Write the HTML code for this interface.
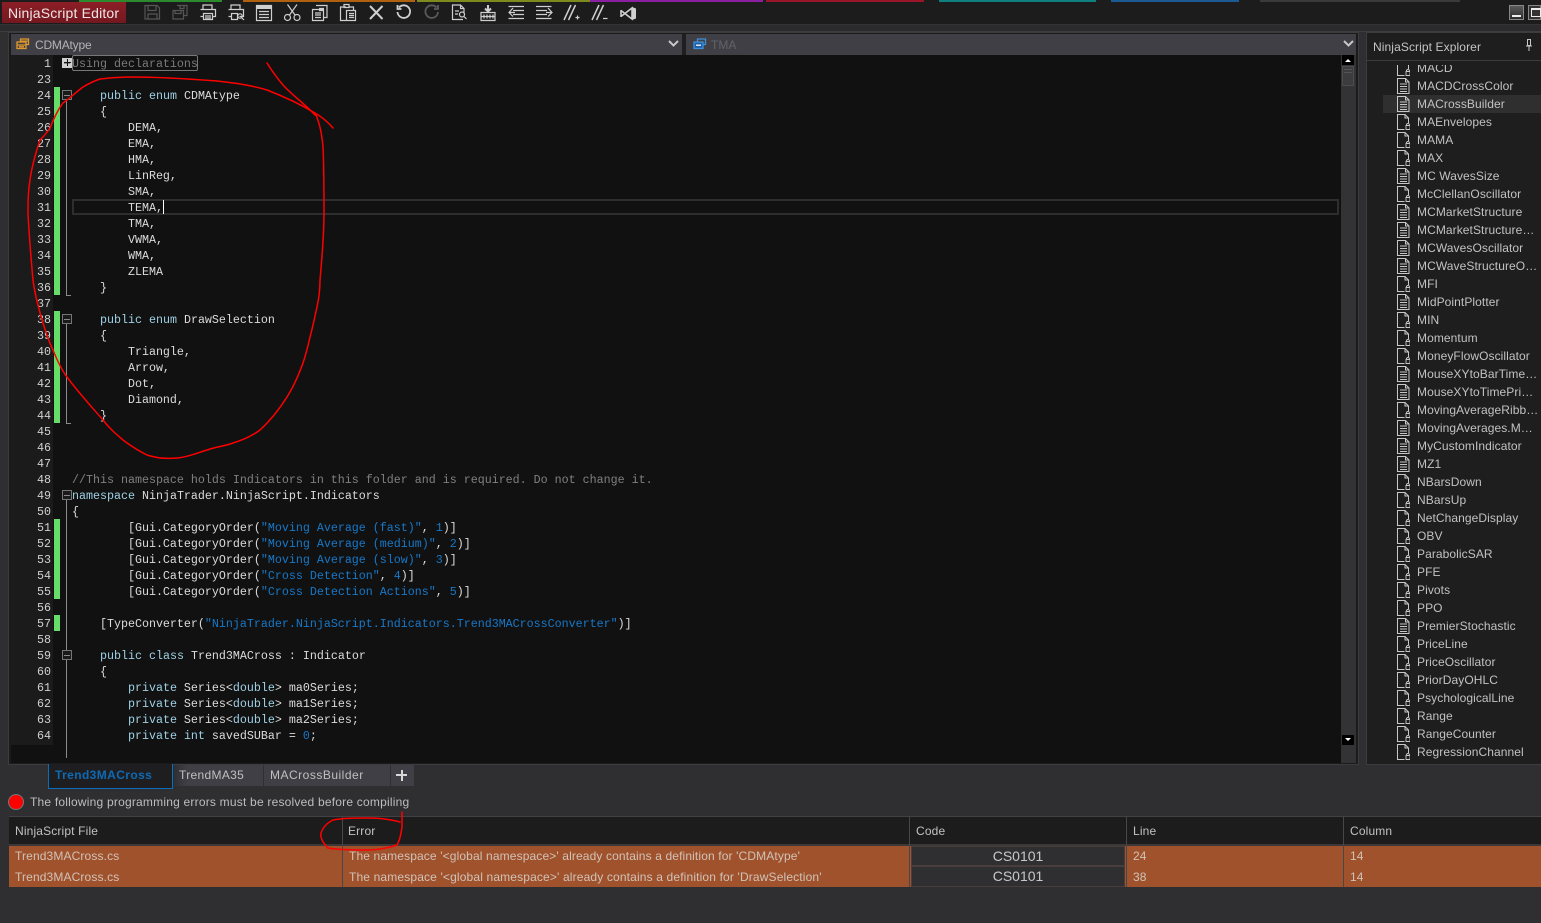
<!DOCTYPE html>
<html><head><meta charset="utf-8"><title>NinjaScript Editor</title>
<style>
html,body{margin:0;padding:0;background:#2f2f32;width:1541px;height:923px;overflow:hidden}
body{position:relative;font-family:"Liberation Sans",Arial,sans-serif;font-size:12px;color:#c4c4c4}
.a{position:absolute;display:block}
.t{position:absolute;white-space:nowrap;line-height:16px}
pre{position:absolute;margin:0;font-family:"Liberation Mono",monospace;font-size:11.67px;line-height:16px;color:#dcdcdc}
.k{color:#9fd0e4}.s{color:#1878c8}.c{color:#808080}
#ex div{height:18px;line-height:18px;padding-left:34px;position:relative;white-space:nowrap;letter-spacing:.08px;color:#c2c2c2}
#ex svg{position:absolute;left:14px;top:1px}
.g{position:absolute;left:54px;width:6px;background:#66dd66}
.fb{position:absolute;left:62px;width:8px;height:8px;border:1px solid #767676;background:#1a1a1a}
.fb:after{content:"";position:absolute;left:1px;right:1px;top:3.5px;height:1px;background:#8a8a8a}
.v{position:absolute;left:66px;width:1px;background:#8a8a8a}
.h{position:absolute;left:66px;width:5px;height:1px;background:#8a8a8a}
.sep{position:absolute;width:1px;top:817px;height:70px;background:#47474a}
.cell{position:absolute;line-height:20px;white-space:nowrap;color:#cfc3b8;letter-spacing:.13px}
.hd{position:absolute;top:823px;line-height:16px;color:#c2c2c2;letter-spacing:.15px}
</style></head><body>

<!-- top colour strip -->
<div class="a" style="left:0;top:0;width:1541px;height:24px;background:#1c1c1c"></div>
<div class="a" style="left:79px;top:0;width:143px;height:2px;background:#2c8a2c"></div>
<div class="a" style="left:243px;top:0;width:172px;height:2px;background:#b0610f"></div>
<div class="a" style="left:417px;top:0;width:173px;height:2px;background:#7f8a1c"></div>
<div class="a" style="left:590px;top:0;width:173px;height:2px;background:#8a1fa0"></div>
<div class="a" style="left:766px;top:0;width:158px;height:2px;background:#99152a"></div>
<div class="a" style="left:939px;top:0;width:157px;height:2px;background:#0f8080"></div>
<div class="a" style="left:1111px;top:0;width:128px;height:2px;background:#1c5a94"></div>
<div class="a" style="left:1260px;top:0;width:200px;height:2px;background:#3a3a3a"></div>

<!-- title -->
<div class="a" style="left:2px;top:2px;width:124px;height:21px;background:linear-gradient(#8c1e26,#741820)"></div>
<div class="t" style="left:8px;top:5px;font-size:14px;letter-spacing:.17px;color:#f0e6e6">NinjaScript Editor</div>

<!-- toolbar band -->
<div class="a" style="left:0;top:24px;width:1541px;height:1px;background:#333336"></div>
<div class="a" style="left:0;top:25px;width:1541px;height:6px;background:#2b2b2e"></div>
<div class="a" style="left:0;top:31px;width:1541px;height:1px;background:#3d3d40"></div>

<svg class="a" style="left:0;top:0" width="660" height="26" fill="none" stroke="#cfcfcf" stroke-width="1.2">
 <g stroke="#555"><path d="M145 5.500h12l2.500 2.500v11h-14.500zM148 5.500v5h8v-5M148 19v-5h9v5"/></g>
 <g stroke="#555"><path d="M177 5.500h10v10h-3M180 5.500v3h4v-3M173 10.500h10.500v8.500h-10.500zM175 10.500v3h6v-3"/></g>
 <path d="M203 9.500v-4.500h9v4.500M200.500 9.500h15v7h-3M203.500 16.500h-3M203.500 13.500h9v6h-9zM205 16h6M205 18h6"/>
 <path d="M231 9.500v-4.500h9v4.500M228.500 9.500h15v7h-4M231.500 16.500h-3M231.500 13.500h6v6h-6z"/><circle cx="240" cy="16" r="2.200"/><path d="M241.500 17.500l2.500 2.500"/>
 <path d="M256.500 5.500h15v15h-15zM259 11.500h10M259 14.500h10M259 17.500h10"/><path d="M256.500 7.500h15" stroke-width="3"/>
 <circle cx="287.500" cy="17.500" r="3"/><circle cx="297" cy="17.500" r="3"/><path d="M289.500 15l7.500-10.500M295 15l-7.500-10.500"/>
 <path d="M316 5.500h11v12h-3M319 8.500h5M319 10.500h5M312.500 9.500h11v11h-11zM315 13h6M315 15h6M315 17.500h6"/>
 <path d="M346 7h-5.500v13.500h7M344 4.500h5v3h-5zM349 7h4.500v3M346.500 10.500h9v10h-9zM349 13.500h5M349 15.500h5M349 17.500h5"/>
 <path d="M370 6l12.500 13M382.500 6l-12.500 13" stroke-width="2"/>
 <path d="M399 7.500a6.300 6.300 0 1 1-1.500 4.500M397.500 5v4h4" stroke-width="1.800"/>
 <g stroke="#5a5a5a"><path d="M436.500 7.500a6.300 6.300 0 1 0 1.500 4.500M438 5v4h-4" stroke-width="1.800"/></g>
 <path d="M463 19.500h-10.500v-14.500h8l3.500 3.500v4M460.500 5v3.500h3.500M455 11h4M455 14h3"/><circle cx="462" cy="14.500" r="2.500"/><path d="M464 16.500l2.500 2.500"/>
 <path d="M481 12.500h14v8h-14zM484 14.500v4M487 14.500v4M490 14.500v4M493 14.500v4M481.500 16.500h13"/><path d="M488 5v6M485 8.500l3 3 3-3" stroke-width="2"/>
 <path d="M508.500 6.500h15.500M513 10.500h11M513 14.500h11M508.500 18.500h15.500M513 8l-4 4.500 4 4M509 12.500h6"/>
 <path d="M536 6.500h15.500M536 10.500h11M536 14.500h11M536 18.500h15.500M548 8l4 4.500-4 4M552 12.500h-6"/>
 <path d="M564 20l7-15M568.500 20l7-15" stroke-width="1.500"/><path d="M575.500 17.500h4M577.500 15.500v4"/>
 <path d="M592 20l7-15M596.500 20l7-15" stroke-width="1.500"/><path d="M603 18.500h4.500"/>
 <path d="M621 10v7M621 10.500l11 8.500V8l-11 8.500" stroke-width="1.600"/>
 <path d="M632 7l4 1.500v10l-4 1.500z" fill="#cfcfcf" stroke="none"/>
</svg>

<!-- window buttons -->
<div class="a" style="left:1509px;top:5px;width:15px;height:15px;border:1px solid #888;box-sizing:border-box;background:linear-gradient(#5a5a5a,#2c2c2c)"></div>
<div class="a" style="left:1512px;top:15px;width:9px;height:2px;background:#eee"></div>
<div class="a" style="left:1528px;top:5px;width:13px;height:15px;border:1px solid #888;box-sizing:border-box;background:#333"></div>
<div class="a" style="left:1531px;top:8px;width:10px;height:9px;border:1px solid #eee;border-top-width:2px;box-sizing:border-box"></div>

<!-- editor frame -->
<div class="a" style="left:8px;top:32px;width:1351px;height:733px;border:1px solid #3c3c3f;box-sizing:border-box;background:#1b1b1b"></div>
<div class="a" style="left:11px;top:34px;width:671px;height:21px;background:#3f3f45"></div>
<div class="a" style="left:686px;top:34px;width:670px;height:21px;background:#3f3f45"></div>
<div class="a" style="left:682px;top:34px;width:4px;height:21px;background:#1f1f1f"></div>
<svg class="a" style="left:16px;top:38px" width="14" height="12" fill="none" stroke="#e09a2a" stroke-width="1.300"><path d="M4.500 3.500v-2.500h8v5.500h-2"/><path d="M4.500 3h8" stroke-width="1"/><rect x="1" y="4" width="9" height="6.500" fill="#3f3f45"/><path d="M1 7h9M3 8.800h5"/></svg>
<div class="t" style="left:35px;top:37px;color:#b4b4b4;letter-spacing:-.2px">CDMAtype</div>
<svg class="a" style="left:668px;top:40px" width="11" height="8" fill="none" stroke="#c8c8c8" stroke-width="2"><path d="M1 1l4.500 4.500 4.500-4.500"/></svg>
<svg class="a" style="left:693px;top:38px" width="14" height="12" fill="none" stroke="#3f8fd8" stroke-width="1.300"><path d="M4.500 3.500v-2.500h8v5.500h-2"/><rect x="1" y="4" width="9" height="6.500" fill="#1c5fa8"/><path d="M3 7.200h5" stroke="#fff"/></svg>
<div class="t" style="left:711px;top:37px;color:#636366">TMA</div>
<svg class="a" style="left:1343px;top:40px" width="11" height="8" fill="none" stroke="#c8c8c8" stroke-width="2"><path d="M1 1l4.500 4.500 4.500-4.500"/></svg>

<!-- code area -->
<div class="a" style="left:11px;top:55px;width:42px;height:690px;background:#1b1b1b"></div>
<div class="a" style="left:53px;top:55px;width:1288px;height:708px;background:#111"></div>
<div class="a" style="left:11px;top:745px;width:42px;height:18px;background:#111"></div>

<pre style="left:11px;top:56px;width:40px;text-align:right;color:#d0d0d0">1
23
24
25
26
27
28
29
30
31
32
33
34
35
36
37
38
39
40
41
42
43
44
45
46
47
48
49
50
51
52
53
54
55
56
57
58
59
60
61
62
63
64</pre>

<div class="g" style="top:87px;height:208px"></div>
<div class="g" style="top:311px;height:112px"></div>
<div class="g" style="top:519px;height:80px"></div>
<div class="g" style="top:615px;height:16px"></div>

<div class="fb" style="top:58px;background:#d0d0d0;border-color:#d0d0d0"></div>
<div class="a" style="left:64px;top:62px;width:7px;height:1px;background:#111"></div>
<div class="a" style="left:67px;top:59px;width:1px;height:7px;background:#111"></div>
<div class="a" style="left:72px;top:55px;width:126px;height:16px;border:1px solid #777;border-radius:2px;box-sizing:border-box"></div>

<div class="fb" style="top:90px"></div><div class="v" style="top:100px;height:196px"></div><div class="h" style="top:295px"></div>
<div class="fb" style="top:314px"></div><div class="v" style="top:324px;height:100px"></div><div class="h" style="top:423px"></div>
<div class="fb" style="top:490px"></div><div class="v" style="top:500px;height:150px"></div>
<div class="fb" style="top:650px"></div><div class="v" style="top:660px;height:98px"></div>

<div class="a" style="left:72px;top:199px;width:1267px;height:16px;border:2px solid #2e2e2e;box-sizing:border-box"></div>
<div class="a" style="left:163px;top:200px;width:1px;height:14px;background:#fff"></div>

<pre style="left:72px;top:56px"><span style="color:#7a7a7a">Using declarations</span>

    <span class="k">public</span> <span class="k">enum</span> CDMAtype
    {
        DEMA,
        EMA,
        HMA,
        LinReg,
        SMA,
        TEMA,
        TMA,
        VWMA,
        WMA,
        ZLEMA
    }

    <span class="k">public</span> <span class="k">enum</span> DrawSelection
    {
        Triangle,
        Arrow,
        Dot,
        Diamond,
    }



<span class="c">//This namespace holds Indicators in this folder and is required. Do not change it.</span>
<span class="k">namespace</span> NinjaTrader.NinjaScript.Indicators
{
        [Gui.CategoryOrder(<span class="s">"Moving Average (fast)"</span>, <span class="s">1</span>)]
        [Gui.CategoryOrder(<span class="s">"Moving Average (medium)"</span>, <span class="s">2</span>)]
        [Gui.CategoryOrder(<span class="s">"Moving Average (slow)"</span>, <span class="s">3</span>)]
        [Gui.CategoryOrder(<span class="s">"Cross Detection"</span>, <span class="s">4</span>)]
        [Gui.CategoryOrder(<span class="s">"Cross Detection Actions"</span>, <span class="s">5</span>)]

    [TypeConverter(<span class="s">"NinjaTrader.NinjaScript.Indicators.Trend3MACrossConverter"</span>)]

    <span class="k">public</span> <span class="k">class</span> Trend3MACross : Indicator
    {
        <span class="k">private</span> Series&lt;<span class="k">double</span>&gt; ma0Series;
        <span class="k">private</span> Series&lt;<span class="k">double</span>&gt; ma1Series;
        <span class="k">private</span> Series&lt;<span class="k">double</span>&gt; ma2Series;
        <span class="k">private</span> <span class="k">int</span> savedSUBar = <span class="s">0</span>;</pre>

<!-- scrollbar -->
<div class="a" style="left:1341px;top:55px;width:15px;height:708px;background:#333336"></div>
<div class="a" style="left:1342px;top:55px;width:12px;height:10px;background:#000"></div>
<svg class="a" style="left:1345px;top:59px" width="6" height="3"><path d="M0 3L3 0L6 3z" fill="#fff"/></svg>
<div class="a" style="left:1342px;top:66px;width:12px;height:20px;background:#3c3c3f;border:1px solid #4c4c4f;box-sizing:border-box"></div>
<div class="a" style="left:1344px;top:69px;width:8px;height:1px;background:#555"></div>
<div class="a" style="left:1344px;top:72px;width:8px;height:1px;background:#555"></div>
<div class="a" style="left:1342px;top:735px;width:12px;height:10px;background:#000"></div>
<svg class="a" style="left:1345px;top:738px" width="6" height="3"><path d="M0 0L3 3L6 0z" fill="#fff"/></svg>

<!-- explorer -->
<div class="a" style="left:1366px;top:32px;width:175px;height:733px;border:1px solid #3c3c3f;border-right:0;box-sizing:border-box;background:#1e1e1e"></div>
<div class="a" style="left:1367px;top:60px;width:174px;height:1px;background:#3c3c3f"></div>
<div class="t" style="left:1373px;top:39px;color:#c4c4c4;letter-spacing:.1px">NinjaScript Explorer</div>
<svg class="a" style="left:1525px;top:38px" width="8" height="15" fill="none" stroke="#c8c8c8"><path d="M2.500 1.500h3v6h-3zM1 8h6M4 8v5"/></svg>
<div class="a" style="left:1383px;top:95px;width:158px;height:18px;background:#2f2f2f"></div>

<svg width="0" height="0" style="position:absolute">
 <symbol id="da" viewBox="0 0 13 16"><path d="M.5.500h8l3.500 3.500v11.500h-11.500zM8.500.500v3.500h3.500M3 6h7M3 8.500h7M3 11h7M3 13.500h7" fill="none" stroke="#c8c8c8"/></symbol>
 <symbol id="db" viewBox="0 0 13 16"><path d="M7.500 15.500h-7v-15h7.500l3.500 3.500v5M8 .500v3.500h3.500" fill="none" stroke="#c8c8c8"/><path d="M9.500 11.500v-.5a1.500 1.500 0 0 1 3 0v.5M9 11.500h4v4h-4z" fill="none" stroke="#c8c8c8" stroke-width=".9"/></symbol>
</svg>

<div id="ex" class="a" style="left:1383px;top:65px;width:158px;height:695px;overflow:hidden">
<div style="margin-top:-6px"><svg width="13" height="16"><use href="#db"/></svg>MACD</div>
<div><svg width="13" height="16"><use href="#da"/></svg>MACDCrossColor</div>
<div><svg width="13" height="16"><use href="#da"/></svg>MACrossBuilder</div>
<div><svg width="13" height="16"><use href="#db"/></svg>MAEnvelopes</div>
<div><svg width="13" height="16"><use href="#db"/></svg>MAMA</div>
<div><svg width="13" height="16"><use href="#db"/></svg>MAX</div>
<div><svg width="13" height="16"><use href="#da"/></svg>MC WavesSize</div>
<div><svg width="13" height="16"><use href="#db"/></svg>McClellanOscillator</div>
<div><svg width="13" height="16"><use href="#da"/></svg>MCMarketStructure</div>
<div><svg width="13" height="16"><use href="#da"/></svg>MCMarketStructure…</div>
<div><svg width="13" height="16"><use href="#da"/></svg>MCWavesOscillator</div>
<div><svg width="13" height="16"><use href="#da"/></svg>MCWaveStructureO…</div>
<div><svg width="13" height="16"><use href="#db"/></svg>MFI</div>
<div><svg width="13" height="16"><use href="#da"/></svg>MidPointPlotter</div>
<div><svg width="13" height="16"><use href="#db"/></svg>MIN</div>
<div><svg width="13" height="16"><use href="#db"/></svg>Momentum</div>
<div><svg width="13" height="16"><use href="#db"/></svg>MoneyFlowOscillator</div>
<div><svg width="13" height="16"><use href="#da"/></svg>MouseXYtoBarTime…</div>
<div><svg width="13" height="16"><use href="#da"/></svg>MouseXYtoTimePri…</div>
<div><svg width="13" height="16"><use href="#db"/></svg>MovingAverageRibb…</div>
<div><svg width="13" height="16"><use href="#da"/></svg>MovingAverages.M…</div>
<div><svg width="13" height="16"><use href="#da"/></svg>MyCustomIndicator</div>
<div><svg width="13" height="16"><use href="#da"/></svg>MZ1</div>
<div><svg width="13" height="16"><use href="#db"/></svg>NBarsDown</div>
<div><svg width="13" height="16"><use href="#db"/></svg>NBarsUp</div>
<div><svg width="13" height="16"><use href="#db"/></svg>NetChangeDisplay</div>
<div><svg width="13" height="16"><use href="#db"/></svg>OBV</div>
<div><svg width="13" height="16"><use href="#db"/></svg>ParabolicSAR</div>
<div><svg width="13" height="16"><use href="#db"/></svg>PFE</div>
<div><svg width="13" height="16"><use href="#db"/></svg>Pivots</div>
<div><svg width="13" height="16"><use href="#db"/></svg>PPO</div>
<div><svg width="13" height="16"><use href="#da"/></svg>PremierStochastic</div>
<div><svg width="13" height="16"><use href="#db"/></svg>PriceLine</div>
<div><svg width="13" height="16"><use href="#db"/></svg>PriceOscillator</div>
<div><svg width="13" height="16"><use href="#db"/></svg>PriorDayOHLC</div>
<div><svg width="13" height="16"><use href="#db"/></svg>PsychologicalLine</div>
<div><svg width="13" height="16"><use href="#db"/></svg>Range</div>
<div><svg width="13" height="16"><use href="#db"/></svg>RangeCounter</div>
<div><svg width="13" height="16"><use href="#db"/></svg>RegressionChannel</div>
</div>

<!-- tabs -->
<div class="a" style="left:48px;top:764px;width:125px;height:25px;border:1px solid #0a6ebd;border-top:0;box-sizing:border-box;background:#1e1e20"></div>
<div class="t" style="left:55px;top:767px;font-weight:bold;color:#0e6ab5;letter-spacing:.4px">Trend3MACross</div>
<div class="a" style="left:173px;top:765px;width:90px;height:21px;background:linear-gradient(90deg,#2e2e31,#3f3f45 14px)"></div>
<div class="t" style="left:179px;top:767px;color:#c0c0c0;letter-spacing:.32px">TrendMA35</div>
<div class="a" style="left:264px;top:765px;width:126px;height:21px;background:#3f3f45"></div>
<div class="t" style="left:270px;top:767px;color:#c0c0c0;letter-spacing:.5px">MACrossBuilder</div>
<div class="a" style="left:391px;top:765px;width:23px;height:21px;background:#3f3f45"></div>
<div class="a" style="left:396px;top:774px;width:11px;height:2px;background:#d8d8d8"></div>
<div class="a" style="left:400.500px;top:770px;width:2px;height:11px;background:#d8d8d8"></div>

<!-- message -->
<div class="a" style="left:8px;top:794px;width:16px;height:16px;border-radius:50%;background:#f00;border:1px solid #777;box-sizing:border-box"></div>
<div class="t" style="left:30px;top:794px;color:#bdbdbd;letter-spacing:.21px">The following programming errors must be resolved before compiling</div>

<!-- table -->
<div class="a" style="left:9px;top:816px;width:1532px;height:1px;background:#424245"></div>
<div class="a" style="left:9px;top:817px;width:1532px;height:28px;background:#1c1c1c"></div>
<div class="a" style="left:9px;top:845px;width:1532px;height:42px;background:#a0522d"></div>
<div class="a" style="left:9px;top:844px;width:1532px;height:2px;background:#3c3838"></div>
<div class="a" style="left:911px;top:846px;width:214px;height:20px;background:#2f2f32;border:1px solid #483f3c;box-sizing:border-box"></div>
<div class="a" style="left:911px;top:866px;width:214px;height:21px;background:#2f2f32;border:1px solid #483f3c;box-sizing:border-box"></div>
<div class="sep" style="left:342px"></div><div class="sep" style="left:909px"></div><div class="sep" style="left:1126px"></div><div class="sep" style="left:1343px"></div>

<div class="hd" style="left:15px">NinjaScript File</div>
<div class="hd" style="left:348px">Error</div>
<div class="hd" style="left:916px">Code</div>
<div class="hd" style="left:1133px">Line</div>
<div class="hd" style="left:1350px">Column</div>

<div class="cell" style="left:15px;top:846px">Trend3MACross.cs</div>
<div class="cell" style="left:349px;top:846px">The namespace '&lt;global namespace&gt;' already contains a definition for 'CDMAtype'</div>
<div class="cell" style="left:911px;width:214px;text-align:center;top:846px;font-size:14px;color:#c8c8c8;letter-spacing:0">CS0101</div>
<div class="cell" style="left:1133px;top:846px">24</div>
<div class="cell" style="left:1350px;top:846px">14</div>
<div class="cell" style="left:15px;top:867px">Trend3MACross.cs</div>
<div class="cell" style="left:349px;top:867px;letter-spacing:.15px">The namespace '&lt;global namespace&gt;' already contains a definition for 'DrawSelection'</div>
<div class="cell" style="left:911px;width:214px;text-align:center;top:866px;font-size:14px;color:#c8c8c8;letter-spacing:0">CS0101</div>
<div class="cell" style="left:1133px;top:867px">38</div>
<div class="cell" style="left:1350px;top:867px">14</div>

<!-- red hand annotations -->
<svg class="a" style="left:0;top:0" width="1541" height="923" fill="none" stroke="#f00" stroke-width="1.500" stroke-linecap="round" stroke-linejoin="round">
 <path d="M333 128C327 121 322 117 315 113C300 104 285 97 267 90C250 85 235 83 217 81C190 79 160 77 133 77C120 77 108 78 100 79C94 81 88 84 83 87C75 93 69 99 63 103C59 108 54 118 50 128C46 134 43 137 40 140C36 152 32 165 30 180C28 192 28 202 28 213C29 235 31 258 33 280C35 296 39 310 43 323C46 333 49 342 53 350C57 360 61 369 67 377C78 392 90 405 103 420C109 428 116 434 123 440C131 446 139 451 147 455C156 458 166 459 177 458C188 457 197 453 207 450C216 447 225 446 233 443C243 440 252 436 260 430C271 420 280 408 287 397C294 386 299 374 303 363C306 354 308 346 310 337C313 326 315 316 317 307C319 298 320 290 320 280C322 258 324 235 324 213C324 190 324 168 323 147C322 135 320 123 315 113"/>
 <path d="M267 63C272 71 277 78 283 85C293 96 305 104 315 115"/>
 <path d="M402 812C402 817 402 822 402 827C401 834 400 840 397 845C388 848 378 850 367 850C354 850 340 850 328 848C323 843 320 838 321 833C323 827 327 823 333 820C344 818 355 818 367 818C378 818 390 819 400 822"/>
</svg>
</body></html>
